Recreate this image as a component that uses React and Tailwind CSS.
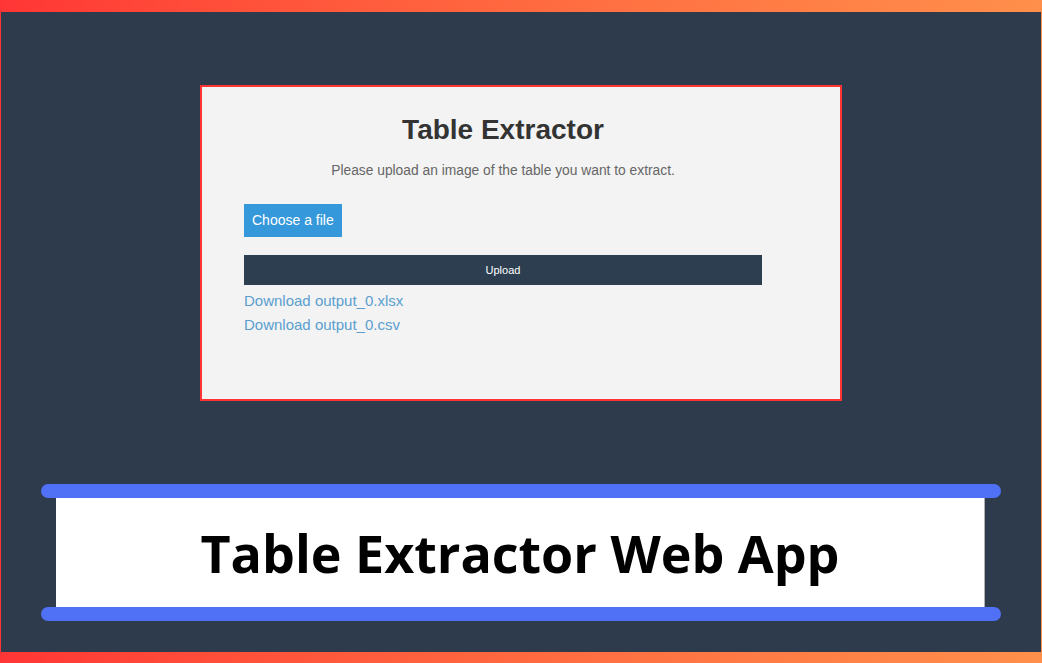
export default function App() {
  return (
    <div className="w-[1042px] h-[663px] bg-gradient-to-r from-[#ff3535] to-[#ff8f4b] pt-[12px] pb-[11px] px-px">
      <div className="h-full bg-[#2d3b4d] flex flex-col">
        {/* Card */}
        <div className="mt-[73px] ml-[199px] w-[642px] h-[316px] border-2 border-[#ff3333] bg-[#f3f3f3] pl-[42px] pt-[27px] font-['Liberation_Sans',Arial,sans-serif]">
          <div className="w-[518px] flex flex-col">
            <h1 className="text-center text-[28px] leading-[32px] font-bold text-[#333333]">
              Table Extractor
            </h1>
            <p className="mt-[15px] text-center text-[13.8px] leading-[20px] text-[#666666]">
              Please upload an image of the table you want to extract.
            </p>
            <div className="mt-[23px]">
              <button className="h-[33px] px-[8px] bg-[#3498db] text-white text-[14px]">
                Choose a file
              </button>
            </div>
            <button className="mt-[18px] h-[30px] w-full bg-[#2c3e50] text-white text-[11px]">
              Upload
            </button>
            <a className="mt-[4px] text-[15px] leading-[24px] text-[#5a9fd0]" href="#">
              Download output_0.xlsx
            </a>
            <a className="text-[15px] leading-[24px] text-[#5a9fd0]" href="#">
              Download output_0.csv
            </a>
          </div>
        </div>

        {/* Banner */}
        <div className="mt-[83px] ml-[40px] w-[960px] flex flex-col">
          <div className="h-[14px] rounded-full bg-[#5070f5]" />
          <div className="ml-[15px] w-[929px] h-[109px] bg-white border-r border-[#b0b0b0] flex items-center justify-center">
            <span className="text-[52px] font-bold text-black font-['Open_Sans',sans-serif] leading-none">
              Table Extractor Web App
            </span>
          </div>
          <div className="h-[14px] rounded-full bg-[#5070f5]" />
        </div>
      </div>
    </div>
  );
}
